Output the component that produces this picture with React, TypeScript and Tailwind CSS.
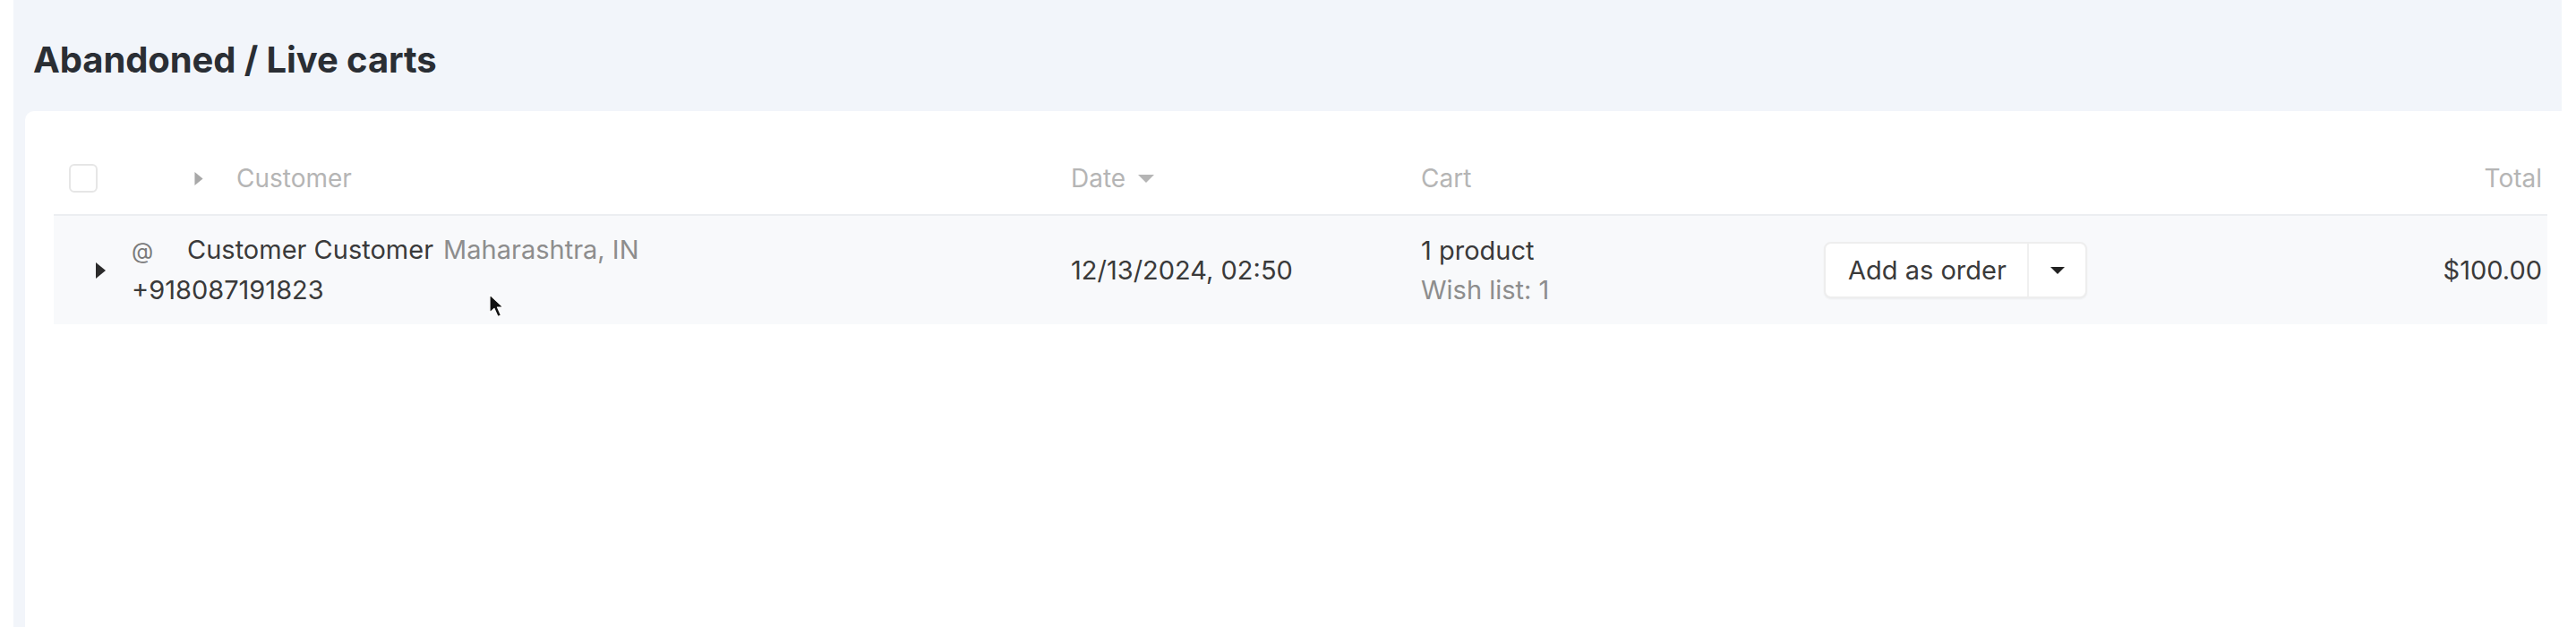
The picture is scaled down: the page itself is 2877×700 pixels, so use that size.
import React from "react";

function TriRight({ className }: { className?: string }) {
  return (
    <svg viewBox="0 0 11 18" className={className}>
      <path d="M0 0 L11 9 L0 18 Z" fill="currentColor" />
    </svg>
  );
}

function TriDown({ className }: { className?: string }) {
  return (
    <svg viewBox="0 0 18 9" className={className}>
      <path d="M0 0 L18 0 L9 9 Z" fill="currentColor" />
    </svg>
  );
}

function Cursor() {
  return (
    <svg viewBox="0 0 18 27" className="w-[18px] h-[27px]">
      <path
        d="M1 1 L1 21 L6 16.5 L10 25.5 L13.5 24 L9.5 15 L16 15 Z"
        fill="#111"
        stroke="#fff"
        strokeWidth="1.2"
        strokeLinejoin="round"
      />
    </svg>
  );
}

export default function App() {
  return (
    <div className="relative h-[700px] w-[2877px] bg-white pl-[15px] flex flex-col overflow-hidden font-['Inter','Noto_Sans',sans-serif]">
      <div className="mr-[16px] h-[124px] shrink-0 bg-[#f2f5fa] flex items-center pl-[22px] pt-[9px]">
        <h1 className="text-[40px] font-bold text-[#2a2e34] leading-none tracking-[-0.1px]">
          Abandoned / Live carts
        </h1>
      </div>
      <div className="flex-1 bg-[#f2f5fa] pl-[13px] flex">
        <div className="flex-1 bg-white rounded-tl-[10px] pl-[32px] pr-[32px] pt-[35px]">
          {/* header row */}
          <div className="grid grid-cols-[1136px_391px_450px_297px_1fr] h-[82px] items-center border-b-2 border-[#eceef1] text-[28px] text-[#b5b5b5]">
            <div className="flex items-center pl-[17px]">
              <div className="w-[32px] h-[32px] rounded-[6px] border-2 border-[#e6e6e6] bg-white" />
              <TriRight className="ml-[107px] w-[12px] h-[15px] text-[#a8a8a8]" />
              <span className="ml-[36px]">Customer</span>
            </div>
            <div className="flex items-center">
              <span>Date</span>
              <TriDown className="ml-[14px] w-[18px] h-[9px] text-[#b5b5b5]" />
            </div>
            <div>Cart</div>
            <div />
            <div className="text-right pr-[6px]">Total</div>
          </div>
          {/* data row */}
          <div className="grid grid-cols-[1136px_391px_450px_297px_1fr] h-[121px] items-center bg-[#f8f9fb] text-[29px] text-[#3a3a3a]">
            <div className="flex items-center pl-[47px]">
              <TriRight className="w-[11px] h-[18px] text-[#2b2b2b]" />
              <div className="ml-[29px] flex flex-col leading-[44px]">
                <div className="flex items-baseline">
                  <span className="w-[62px] text-[25px] text-[#7a7a7a]">@</span>
                  <span>Customer Customer</span>
                  <span className="ml-[11px] text-[#8d8d8d]">Maharashtra, IN</span>
                </div>
                <div>+918087191823</div>
              </div>
            </div>
            <div>12/13/2024, 02:50</div>
            <div className="flex flex-col leading-[44px]">
              <span>1 product</span>
              <span className="text-[#8d8d8d]">Wish list: 1</span>
            </div>
            <div>
              <div className="w-[294px] h-[63px] flex rounded-[8px] border-2 border-[#eeeeee] bg-white shadow-[0_1px_2px_rgba(0,0,0,0.05)]">
                <div className="flex-1 flex items-center pl-[25px] text-[29px] text-[#3a3a3a]">
                  Add as order
                </div>
                <div className="w-[65px] flex items-center justify-center border-l-2 border-[#f0f0f0]">
                  <TriDown className="w-[16px] h-[8px] text-[#222]" />
                </div>
              </div>
            </div>
            <div className="text-right pr-[6px]">$100.00</div>
          </div>
        </div>
      </div>
      <div className="absolute left-[546px] top-[328px]">
        <Cursor />
      </div>
    </div>
  );
}
